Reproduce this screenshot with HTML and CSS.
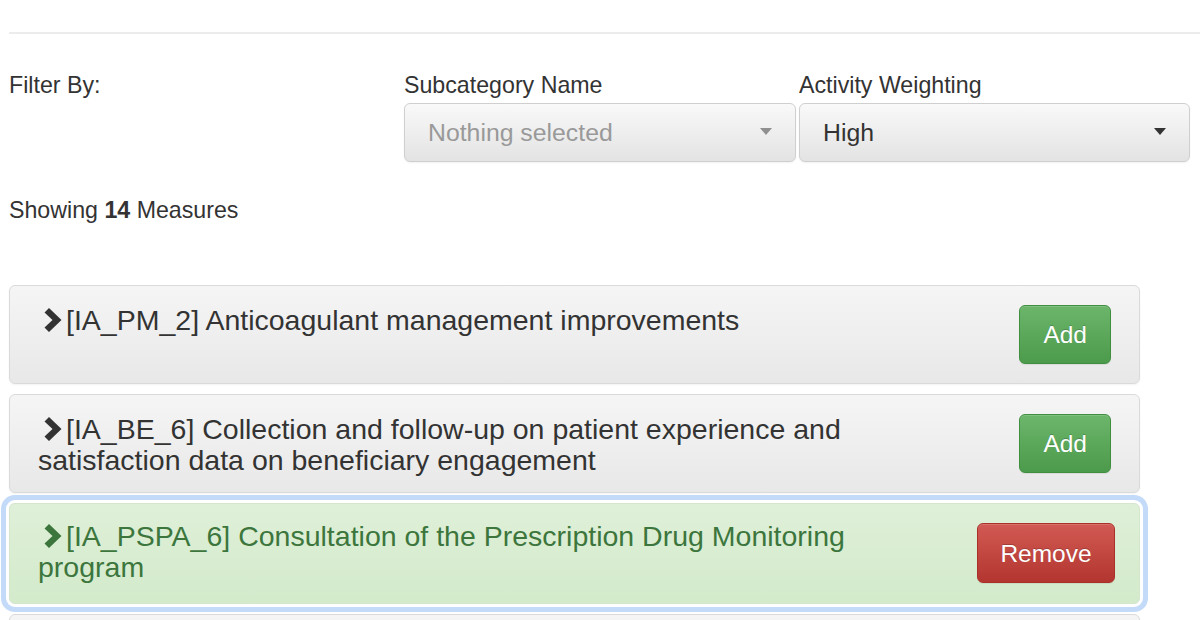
FILE: index.html
```html
<!DOCTYPE html>
<html lang="en">
<head>
<meta charset="utf-8">
<title>Measures</title>
<link rel="stylesheet" href="styles.css">
</head>
<body>
<div class="page">
  <hr class="divider">

  <div class="filters">
    <div class="filter-col">
      <div class="filter-label">Filter By:</div>
    </div>
    <div class="filter-col">
      <div class="filter-label">Subcategory Name</div>
      <div class="select">
        <span class="select-text placeholder">Nothing selected</span>
        <span class="caret caret-light"></span>
      </div>
    </div>
    <div class="filter-col">
      <div class="filter-label">Activity Weighting</div>
      <div class="select">
        <span class="select-text">High</span>
        <span class="caret"></span>
      </div>
    </div>
  </div>

  <p class="count">Showing <b>14</b> Measures</p>

  <div class="panels">
    <div class="panel">
      <div class="panel-title"><svg class="chev" viewBox="0 0 19 24" width="19" height="24"><polygon points="0.5,4.5 5,0 17.5,12 5,24 0.5,19.5 8.5,12"/></svg>[IA_PM_2] Anticoagulant management improvements</div>
      <button class="btn btn-add">Add</button>
    </div>
    <div class="panel">
      <div class="panel-title"><svg class="chev" viewBox="0 0 19 24" width="19" height="24"><polygon points="0.5,4.5 5,0 17.5,12 5,24 0.5,19.5 8.5,12"/></svg>[IA_BE_6] Collection and follow-up on patient experience and satisfaction data on beneficiary engagement</div>
      <button class="btn btn-add">Add</button>
    </div>
    <div class="panel panel-selected">
      <div class="panel-title"><svg class="chev" viewBox="0 0 19 24" width="19" height="24"><polygon points="0.5,4.5 5,0 17.5,12 5,24 0.5,19.5 8.5,12"/></svg>[IA_PSPA_6] Consultation of the Prescription Drug Monitoring program</div>
      <button class="btn btn-remove">Remove</button>
    </div>
    <div class="panel panel-next"></div>
  </div>
</div>
</body>
</html>
```

FILE: styles.css
```css
html, body {
  margin: 0;
  padding: 0;
  height: 620px;
  overflow: hidden;
  background: #fff;
}

body {
  font-family: "Liberation Sans", Arial, Helvetica, sans-serif;
  color: #333;
  font-size: 23px;
  line-height: 26px;
}

.page {
  padding: 32px 0 0 9px;
}

.divider {
  margin: 0;
  height: 0;
  border: 0;
  border-top: 2px solid #ececec;
}

.filters {
  display: grid;
  grid-template-columns: 392px 392px 391px;
  column-gap: 3px;
  margin-top: 38px;
}

.filter-label {
  font-size: 23.2px;
  line-height: 26px;
  height: 26px;
}

.select {
  box-sizing: border-box;
  margin-top: 5px;
  height: 59px;
  border: 1px solid #cfcfcf;
  border-radius: 6px;
  background: linear-gradient(to bottom, #f9f9f9 0%, #e3e3e3 100%);
  box-shadow: 0 1px 2px rgba(0, 0, 0, 0.06);
  display: flex;
  align-items: center;
  justify-content: space-between;
  padding: 0 23px 0 23px;
}

.select-text {
  font-size: 24.8px;
  line-height: 28px;
  color: #333;
}

.select-text.placeholder {
  color: #999;
}

.caret {
  width: 0;
  height: 0;
  border-top: 7px solid #333;
  border-left: 6px solid transparent;
  border-right: 6px solid transparent;
  margin-top: -2px;
}

.caret-light {
  border-top-color: #8f8f8f;
}

.count {
  margin: 35px 0 0 0;
  font-size: 23.2px;
  line-height: 26px;
}

.count b {
  font-weight: bold;
}

.panels {
  margin-top: 62px;
  width: 1131px;
  display: flex;
  flex-direction: column;
  gap: 10px;
}

.panel {
  box-sizing: border-box;
  display: flex;
  align-items: flex-start;
  justify-content: space-between;
  padding: 19px 28px 19px 28px;
  border: 1px solid #dadada;
  border-radius: 6px;
  background: linear-gradient(to bottom, #f5f5f5 0%, #e8e8e8 100%);
  box-shadow: 0 1px 2px rgba(0, 0, 0, 0.05);
}

.panel-title {
  width: 860px;
  font-size: 28.5px;
  line-height: 31px;
  margin-bottom: -3px;
  color: #333;
}

.chev {
  display: inline-block;
  vertical-align: -2px;
  margin: 0 3px 0 6px;
  fill: #333;
}

.panel-selected {
  background: linear-gradient(to bottom, #dff0d8 0%, #d3eacb 100%);
  border-color: #d4e6cb;
  box-shadow: 0 0 0 3px #fff, 0 0 0 8px #c3dbf9;
  padding-top: 17px;
  padding-right: 24px;
  padding-bottom: 20px;
}

.panel-selected .panel-title {
  color: #3c763d;
}

.panel-selected .chev {
  fill: #3c763d;
}

.panel-next {
  height: 99px;
}

.btn {
  flex: none;
  box-sizing: border-box;
  height: 59px;
  padding: 0 23px;
  font-family: "Liberation Sans", Arial, Helvetica, sans-serif;
  font-size: 24.5px;
  line-height: 27px;
  color: #fff;
  border-radius: 6px;
  text-shadow: 0 -1px 0 rgba(0, 0, 0, 0.2);
  box-shadow: inset 0 1px 0 rgba(255, 255, 255, 0.15), 0 1px 1px rgba(0, 0, 0, 0.075);
  cursor: pointer;
}

.btn-add {
  background: linear-gradient(to bottom, #6cb66b 0%, #4c9a4b 100%);
  border: 1px solid #3f8f3e;
}

.btn-remove {
  margin-top: 2px;
  height: 60px;
  width: 138px;
  padding: 0;
  background: linear-gradient(to bottom, #d25a54 0%, #b3352f 100%);
  border: 1px solid #a9302b;
}
```
